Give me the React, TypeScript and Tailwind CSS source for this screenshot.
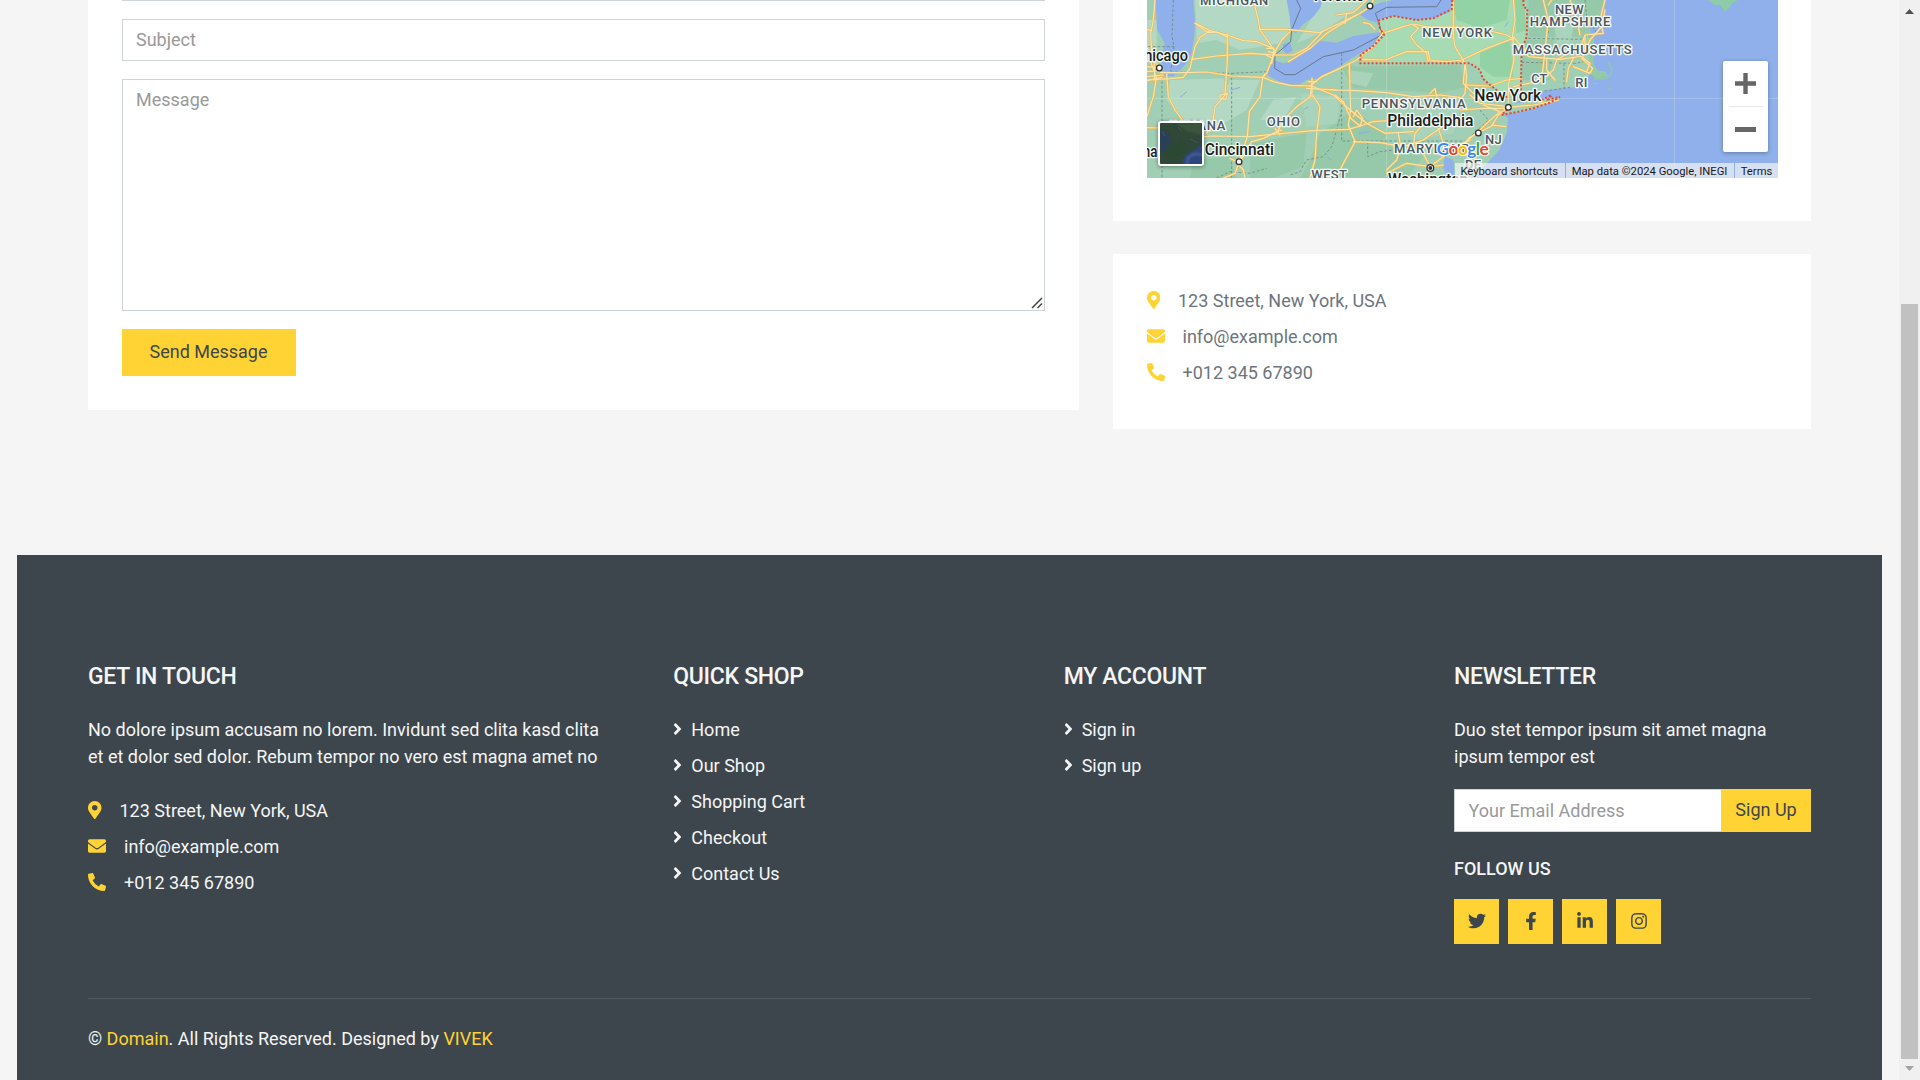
import React from "react";
import {
  FaAngleRight,
  FaEnvelope,
  FaFacebookF,
  FaInstagram,
  FaLinkedinIn,
  FaMapMarkerAlt,
  FaPhoneAlt,
  FaTwitter,
} from "react-icons/fa";

const roads = [
  "M45 0 L40 60 L32 100 L36 170 L58 204",
  "M21 88 L36 92 M21 200 L58 204 M21 215 L60 212 M21 230 L70 225 M30 180 L50 235 M42 175 L44 240 M21 242 L66 232",
  "M48 240 L40 290 L30 320 L21 350",
  "M21 240 L90 236 L130 232 L150 205 L165 140 L180 112 L210 92 L168 70",
  "M80 222 L85 290 L105 330 L140 378 L150 410",
  "M60 218 L130 218 L200 216 L275 228 L370 232 L400 245 L450 256 L515 258 L580 285 L625 325 L655 350 L680 370 L735 400 L820 395",
  "M210 92 L260 105 L310 122 L350 125 L400 145",
  "M165 70 L205 98 L230 96 L260 110",
  "M340 0 L355 60 L360 90 L385 125 L402 150",
  "M360 88 L440 88 L540 98 L595 72 L660 40 L690 20 L700 0",
  "M155 178 L230 168 L330 160 L400 165",
  "M402 160 L425 120 L450 95",
  "M405 155 L380 220 L368 232 L360 290 L328 335 L322 410 L297 485",
  "M380 145 L402 145 M385 155 L405 160 M378 165 L398 175 M402 150 L395 190",
  "M262 100 L262 180 L258 240 L255 285 L225 320 L218 370 L200 400",
  "M400 165 L460 165 L500 145 L545 98 M445 185 L510 145 L560 100 L620 62 L650 45",
  "M590 45 L640 38 L680 0 M620 40 L615 70",
  "M240 285 L262 280 L258 298 L240 295 Z",
  "M21 383 L55 384 M150 412 L220 408 L330 410 L410 402 L520 392 L625 388 L660 378",
  "M515 260 L510 290 L470 320 L440 350 L412 395 L370 415 L335 425 L300 485",
  "M297 488 L270 475 M297 490 L285 520 L250 534 M290 488 L310 510 L315 534 M300 480 L320 440",
  "M516 235 L516 290 M505 245 L530 245 M500 265 L590 270 M520 288 L540 320 L530 400 L525 480 L510 534",
  "M368 232 L375 222 M405 385 L420 405 M400 400 L425 390",
  "M510 258 L545 230 L600 205 L650 180 L700 140 L728 100",
  "M628 190 L630 270 L632 330 L625 375 L645 425 L605 500 L590 534",
  "M570 270 L650 272 L740 278 L820 290 L900 285 L960 292",
  "M585 285 L610 305 L632 355 L660 378 L668 355 L650 330 L640 350",
  "M640 425 L720 428 L790 440 L850 420 L900 385 L940 350",
  "M660 378 L700 365 L770 360 M775 400 L782 440 L770 480 L740 510",
  "M820 440 L825 400 L860 360 M870 280 L885 265 L890 290",
  "M840 440 L870 500 L910 495 M870 500 L930 455 L990 420 M870 500 L855 534 M870 500 L800 490 L740 520 M895 385 L910 430 L990 440",
  "M735 98 L790 80 L820 72 L870 82 L940 82 L1020 85 L1100 105 L1120 118",
  "M820 75 L835 85 L812 110 L830 135 L860 160 L865 188",
  "M665 178 L735 180 L800 155 L865 155 L870 182 L920 185 L965 180 L1040 145 L1120 115",
  "M940 0 L940 110 L945 140 L975 190 L980 230 L975 280 L955 310",
  "M670 68 L690 72 L705 88 M720 95 L730 90",
  "M1120 0 L1125 60 L1118 105 L1122 180 L1105 255 L1105 320",
  "M1120 110 L1150 145 L1165 170 L1260 178 L1330 168 L1350 120 L1385 80 L1395 30",
  "M1210 0 L1225 60 L1215 150 L1208 215 L1190 245 L1120 260",
  "M1290 0 L1310 55 L1320 105",
  "M1235 0 L1225 15 M1395 0 L1380 60 L1390 100 L1335 105 L1325 135 L1290 155 L1250 180 L1240 210 L1200 245",
  "M1300 175 L1285 205 L1280 245 M1325 170 L1350 190 L1340 215 M1220 175 L1220 210 L1245 240 M1335 110 L1335 155",
  "M1300 200 L1350 220 L1358 205 L1325 175",
  "M960 185 L975 190 L970 250 L1000 280 L1090 285",
  "M975 255 L1050 258 L1100 240 L1145 235 M990 285 L1020 310 L1105 320",
  "M960 330 L1030 325 L1105 325 M1030 315 L1080 335 L1040 370 L1015 395 L970 430",
  "M1105 322 L1180 315 L1235 305 L1255 300",
  "M1105 320 L1075 345 L1055 378 L1015 398 L985 415 M1055 375 L1098 380",
];

const borders = [
  "M100 0 L96 110 L102 140 L21 140 M102 140 L92 215",
  "M66 230 L66 534 M92 215 L275 220 L275 534 M275 220 L385 215",
  "M605 160 L605 423 L985 423",
  "M605 330 L590 390 L575 440 L550 470 L500 480 L480 515 L450 525",
  "M683 425 L683 470 L720 455 L760 450",
  "M230 534 L270 515 L330 520 L380 505",
  "M1165 115 L1320 118 L1370 100 M1145 187 L1310 190 L1330 185 M1272 190 L1272 265 M1225 100 L1222 30",
  "M1200 275 L1290 262 M1335 0 L1340 50 L1370 100",
  "M1020 330 L1045 360 L985 415",
];

const cities: [number, number][] = [
  [690, 18],
  [58, 204],
  [297, 485],
  [1105, 322],
  [1015, 399],
];

type Label = { t: string; x: number; y: number; w: number };

const states: Label[] = [
  { t: "MICHIGAN", x: 180, y: 16, w: 205 },
  { t: "OHIO", x: 380, y: 378, w: 100 },
  { t: "INDIANA", x: 88, y: 390, w: 168 },
  { t: "PENNSYLVANIA", x: 665, y: 323, w: 312 },
  { t: "NEW YORK", x: 847, y: 111, w: 209 },
  { t: "MARYLAND", x: 762, y: 459, w: 228 },
  { t: "WEST", x: 514, y: 537, w: 107 },
  { t: "NEW", x: 1245, y: 41, w: 86 },
  { t: "HAMPSHIRE", x: 1169, y: 78, w: 242 },
  { t: "MASSACHUSETTS", x: 1118, y: 162, w: 357 },
  { t: "CT", x: 1174, y: 249, w: 48 },
  { t: "RI", x: 1306, y: 261, w: 36 },
  { t: "NJ", x: 1035, y: 432, w: 50 },
  { t: "DE", x: 975, y: 507, w: 48 },
];

const towns: Label[] = [
  { t: "Toronto", x: 514, y: 2, w: 160 },
  { t: "Chicago", x: -16, y: 182, w: 160 },
  { t: "Cincinnati", x: 194, y: 464, w: 208 },
  { t: "Indiana", x: -80, y: 470, w: 132 },
  { t: "Philadelphia", x: 742, y: 377, w: 258 },
  { t: "New York", x: 1003, y: 302, w: 201 },
  { t: "Washington", x: 744, y: 554, w: 240 },
];

function MapDrawing() {
  return (
    <svg viewBox="21 0 1893 534" className="block h-full w-full" preserveAspectRatio="none">
      <rect x="21" width="1893" height="534" fill="#a1cfb5" />
      <g fill="#b3d8c3">
        <path d="M165 0 H440 L455 95 L420 130 L300 150 L230 120 L170 130Z" />
        <path d="M90 240 L250 235 L270 300 L210 390 L130 360 L80 300Z" />
        <path d="M270 240 L360 240 L320 330 L200 400 L230 330Z" />
        <path d="M545 0 H690 L600 60 L540 100 L470 130 L500 80Z" />
        <path d="M21 60 H50 V150 L21 165Z" />
        <path d="M400 300 L470 290 L430 360 L360 360Z" />
      </g>
      <g fill="#96c9a9">
        <path d="M605 200 L960 195 L980 260 L900 280 L740 270 L640 265Z" />
        <path d="M540 400 L640 330 L740 400 L700 534 H480 L510 480Z" />
        <path d="M330 430 L500 400 L490 500 L400 534 H330Z" />
        <path d="M160 480 L270 470 L290 534 H150Z" />
        <path d="M1165 0 H1390 L1340 110 L1170 110Z" />
        <path d="M1150 120 L1240 120 L1230 240 L1145 240Z" />
        <path d="M720 430 L850 470 L800 534 H690Z" />
      </g>
      <g fill="#a9d4bb">
        <path d="M620 210 L700 220 L680 260 L630 250Z" />
        <path d="M740 300 L960 310 L940 400 L820 420 L780 380Z" />
        <path d="M1240 60 L1300 80 L1290 140 L1250 130Z" />
        <path d="M480 280 L600 290 L590 370 L500 380Z" />
      </g>

      <path
        d="M715 60 L760 48 L830 60 L880 55 L930 35 L937 0 H1150 L1162 25 L1160 100 L1145 170 L1140 285 L1095 285 L1040 245 L995 190 H660 L662 175 L730 105Z"
        fill="#a6dbb4"
      />
      <g fill="#93d2a4">
        <path d="M937 0 H1110 L1100 60 L1020 85 L950 60Z" />
        <path d="M1020 160 L1110 120 L1120 230 L1060 230 L1020 200Z" />
        <path d="M1125 0 H1150 L1160 90 L1130 100Z" />
      </g>

      <g fill="#8fb0ea">
        <path d="M46 0 H160 L165 60 L164 100 L155 160 L140 190 L100 230 L72 226 L64 180 L74 130 L52 90Z" />
        <path d="M440 0 H545 L542 22 L520 50 L490 72 L468 100 L452 90 L450 50Z" />
        <path d="M428 132 L450 125 L458 152 L440 162 L430 152Z" />
        <path d="M400 180 L430 190 L455 182 L500 140 L540 122 L590 128 L640 108 L715 97 L730 105 L700 138 L650 165 L600 198 L540 235 L500 240 L470 258 L420 246 L380 224Z" />
        <path d="M660 45 L690 22 L720 8 L760 0 H937 L930 35 L880 55 L830 60 L760 48 L715 60 L720 70 L690 62Z" />
        <path d="M1395 0 L1375 50 L1350 85 L1352 105 L1362 120 L1360 170 L1358 205 L1340 240 L1300 262 L1210 272 L1120 312 L1262 290 L1255 300 L1180 328 L1090 345 L1104 355 L1100 400 L1078 450 L1050 480 L1000 534 H1914 V0Z" />
        <path d="M915 470 L940 480 L945 534 L925 534 L908 500Z" />
      </g>
      <path d="M1403 188 Q1418 200 1413 222 Q1400 240 1362 236" fill="none" stroke="#8fc9a9" strokeWidth="5" />
      <path d="M1352 95 L1362 130 L1356 160 L1362 195 L1375 212 L1395 214 L1404 228 L1368 236 L1345 215Z" fill="#93caa9" />
      <path d="M1383 0 H1397 L1365 60 L1345 90Z" fill="#94c9a7" />
      <path d="M1704 0 L1725 16 L1740 14 L1755 36 L1772 18 L1778 8 L1795 0Z" fill="#8ecba8" />
      <path d="M1360 250 h12 M1402 267 h12" stroke="#8fc9a9" strokeWidth="4" />

      <g stroke="#85aee8" strokeWidth="3" fill="none">
        <path d="M140 275 L120 292 M275 270 L300 262 M180 395 L190 408 M120 440 L140 430 M655 400 L690 395 M560 470 L575 480 M1095 80 L1105 65 M1180 60 L1185 50 M900 330 L915 325 M505 320 L490 330" />
      </g>

      <g stroke="#ffffff" strokeOpacity=".22" strokeWidth="3">
        <path d="M21 295 H1914 M740 0 V534 M1603 0 V534" />
      </g>

      <g fill="none" stroke="#6f8584" strokeWidth="2.5" strokeDasharray="8 6">
        {borders.map((d) => (
          <path key={d} d={d} />
        ))}
      </g>
      <g fill="none" stroke="#68788c" strokeWidth="3">
        <path d="M470 0 L482 25 L455 90 L452 125 L405 165 L404 205 L435 224 L465 224 L550 170 L640 150 L725 105 L718 70 L706 40 L740 22 L890 20 L903 0" />
      </g>

      <g fill="none" strokeLinejoin="round" strokeLinecap="round">
        <g stroke="#e6b95c" strokeWidth="7">
          {roads.map((d) => (
            <path key={d} d={d} />
          ))}
        </g>
        <g stroke="#fce3a6" strokeWidth="3.6">
          {roads.map((d) => (
            <path key={d} d={d} />
          ))}
        </g>
      </g>

      <g fill="none" stroke="#ea4335" strokeWidth="6" strokeDasharray="6 6">
        <path d="M937 0 L935 28 L905 42 L880 55 L830 60 L760 48 L715 62 L718 80 L732 105 L700 138 L662 165 L661 190 H990 L1020 210 L1028 235 L1050 255 L1085 282 L1105 295" />
        <path d="M1150 0 L1151 22 L1162 25 L1160 110 L1145 150 L1142 285 L1140 305" />
        <path d="M1205 300 L1235 285 L1225 298 L1260 291 L1230 308 L1180 325 L1135 335 L1085 345 L1105 325" />
      </g>

      <g fill="#fff" stroke="#333" strokeWidth="4">
        {cities.map(([x, y]) => (
          <circle key={x} cx={x} cy={y} r="8.5" />
        ))}
        <circle cx="871" cy="504" r="10" />
        <circle cx="871" cy="504" r="4" fill="#222" />
      </g>

      <g
        fontFamily="Roboto, sans-serif"
        paintOrder="stroke"
        strokeLinejoin="round"
        stroke="#f4faf5"
        strokeWidth="8"
      >
        <g fontSize="39" fontWeight="500" fill="#4c5560">
          {states.map((l) => (
            <text key={l.t} x={l.x} y={l.y} textLength={l.w}>
              {l.t}
            </text>
          ))}
        </g>
        <g fontSize="47" fontWeight="500" fill="#1b1d20">
          {towns.map((l) => (
            <text key={l.t} x={l.x} y={l.y} textLength={l.w} lengthAdjust="spacingAndGlyphs">
              {l.t}
            </text>
          ))}
        </g>
        <text x="890" y="465" fontSize="52" textLength="156" strokeWidth="7" fontFamily="Lato, sans-serif" fontWeight="700">
          <tspan fill="#4285f4">G</tspan>
          <tspan fill="#ea4335">o</tspan>
          <tspan fill="#fbbc04">o</tspan>
          <tspan fill="#4285f4">g</tspan>
          <tspan fill="#34a853">l</tspan>
          <tspan fill="#ea4335">e</tspan>
        </text>
      </g>
    </svg>
  );
}

function SatelliteToggle() {
  return (
    <div className="absolute top-[121px] left-[11px] h-[45px] w-[46px] overflow-hidden rounded-[3px] border-2 border-white shadow-[0_1px_4px_rgba(0,0,0,0.4)]">
      <svg viewBox="0 0 42 41" className="block h-full w-full" preserveAspectRatio="none">
        <defs>
          <filter id="soft">
            <feGaussianBlur stdDeviation="1.2" />
          </filter>
        </defs>
        <rect width="42" height="41" fill="#2f4838" />
        <g filter="url(#soft)">
          <path d="M0 6 L8 10 L12 20 L3 30 L0 28Z" fill="#2b3f58" />
          <path d="M16 0 H42 V12 L26 8Z" fill="#3a563c" />
          <path d="M6 24 L22 18 L26 30 L10 38Z" fill="#2b4a31" />
          <path d="M44 20 L34 27 L25 33 L22 43 H44Z" fill="#2f4480" />
          <path d="M44 32 L34 31 L28 35 L27 43" stroke="#4d6298" strokeWidth="2" fill="none" />
        </g>
        <path d="M2 8 L5 13 M18 4 L22 8 M30 16 L38 20" stroke="#40597a" strokeWidth="0.8" />
      </svg>
    </div>
  );
}

function MapPanel() {
  return (
    <div className="relative h-[178px] w-[631px] overflow-hidden">
      <MapDrawing />
      <SatelliteToggle />
      <div className="absolute top-[61px] left-[576px] flex h-[91px] w-[45px] flex-col items-center rounded-[2px] bg-white shadow-[0_1px_4px_rgba(0,0,0,0.3)]">
        <div className="flex h-[45px] items-center">
          <svg viewBox="0 0 21 21" className="h-[21px] w-[21px]">
            <path d="M0 10.5H21M10.5 0V21" stroke="#666" strokeWidth="4.4" />
          </svg>
        </div>
        <div className="h-px w-[34px] bg-[#e6e6e6]" />
        <div className="flex h-[45px] items-center">
          <div className="h-[5px] w-[21px] bg-[#666]" />
        </div>
      </div>
      <div className="absolute right-0 bottom-0 flex h-[15px] text-[11.25px] leading-[17px] whitespace-nowrap text-[#1a1a1a]">
        <div className="w-[110px] bg-[#f5f5f5]/70 pr-[7px] text-right">Keyboard shortcuts</div>
        <div className="ml-px w-[168px] bg-[#f5f5f5]/70 pr-px text-center">
          Map data ©2024 Google, INEGI
        </div>
        <div className="ml-px w-[43px] bg-[#f5f5f5]/70 text-center">Terms</div>
      </div>
    </div>
  );
}

function ContactLines() {
  return (
    <div>
      <p className="mb-[9px] flex items-center">
        <FaMapMarkerAlt className="mr-[18px] h-[18px] w-[13.5px] text-[#FFD333]" />
        123 Street, New York, USA
      </p>
      <p className="mb-[9px] flex items-center">
        <FaEnvelope className="mr-[18px] h-[18px] w-[18px] text-[#FFD333]" />
        info@example.com
      </p>
      <p className="flex items-center">
        <FaPhoneAlt className="mr-[18px] h-[18px] w-[18px] text-[#FFD333]" />
        +012 345 67890
      </p>
    </div>
  );
}

function FooterHeading({ children }: { children: React.ReactNode }) {
  return (
    <h5 className="mb-[26px] text-[23px] leading-[27px] font-medium tracking-[-0.3px] uppercase">
      {children}
    </h5>
  );
}

function LinkList({ items }: { items: string[] }) {
  return (
    <ul className="flex flex-col gap-[9px]">
      {items.map((item) => (
        <li key={item}>
          <a className="flex items-center">
            <FaAngleRight className="mr-[9px] h-[18px] w-[9px]" />
            {item}
          </a>
        </li>
      ))}
    </ul>
  );
}

const socials = [FaTwitter, FaFacebookF, FaLinkedinIn, FaInstagram];

export default function App() {
  return (
    <div className="flex h-[1080px] w-[1920px] overflow-hidden bg-[#f5f5f5] font-['Roboto',sans-serif] text-[18px] leading-[27px] text-[#6c757d]">
      <div className="flex w-[1899px] flex-col">
        <main className="flex h-[555px] items-start gap-[34px] pl-[88px]">
          <form className="flex h-[410px] w-[991px] flex-col items-start bg-white px-[34px]">
            <div className="mb-[18px] h-px w-full bg-[#ced4da]" />
            <input
              placeholder="Subject"
              className="mb-[18px] h-[42px] w-full border border-[#ced4da] px-[13px] pb-[2px] outline-none placeholder:text-[#999]"
            />
            <div className="relative mb-[18px] h-[232px] w-full">
              <textarea
                placeholder="Message"
                className="block h-full w-full resize-none border border-[#ced4da] px-[13px] py-[6px] outline-none placeholder:text-[#999]"
              />
              <svg
                viewBox="0 0 12 12"
                className="absolute right-[2px] bottom-[2px] h-[12px] w-[12px]"
              >
                <path d="M1 11 L11 1 M6.5 11 L11 6.5" stroke="#444" strokeWidth="1.5" />
              </svg>
            </div>
            <button type="button" className="h-[47px] w-[174px] bg-[#FFD333] pr-px pb-[2px] text-[#3D464D]">
              Send Message
            </button>
          </form>
          <div className="flex w-[698px] flex-col">
            <div className="mb-[33px] h-[221px] bg-white px-[34px]">
              <MapPanel />
            </div>
            <div className="h-[175px] bg-white px-[33.5px] pt-[32.5px]">
              <ContactLines />
            </div>
          </div>
        </main>

        <footer className="mr-[17px] ml-[17px] h-[525px] bg-[#3D464D] px-[71px] pt-[107.5px] text-[#f5f5f5]">
          <div className="flex h-[335px]">
            <section className="w-[585.5px]">
              <FooterHeading>Get In Touch</FooterHeading>
              <p className="mb-[27px] w-[530px]">
                No dolore ipsum accusam no lorem. Invidunt sed clita kasd clita et et dolor sed
                dolor. Rebum tempor no vero est magna amet no
              </p>
              <ContactLines />
            </section>
            <section className="w-[390.5px]">
              <FooterHeading>Quick Shop</FooterHeading>
              <LinkList items={["Home", "Our Shop", "Shopping Cart", "Checkout", "Contact Us"]} />
            </section>
            <section className="w-[390.5px]">
              <FooterHeading>My Account</FooterHeading>
              <LinkList items={["Sign in", "Sign up"]} />
            </section>
            <section className="w-[357px]">
              <FooterHeading>Newsletter</FooterHeading>
              <p className="mb-[19px]">Duo stet tempor ipsum sit amet magna ipsum tempor est</p>
              <div className="mb-[26px] flex h-[43px]">
                <input
                  placeholder="Your Email Address"
                  className="w-[267px] border border-r-0 border-[#ced4da] bg-white px-[13.5px] outline-none placeholder:text-[#999]"
                />
                <button type="button" className="w-[90px] bg-[#FFD333] pb-[2px] text-[#3D464D]">
                  Sign Up
                </button>
              </div>
              <h6 className="mb-[19px] text-[18px] leading-[22px] font-medium uppercase">
                Follow Us
              </h6>
              <div className="flex gap-[9px]">
                {socials.map((Icon, i) => (
                  <a
                    key={i}
                    className="flex h-[45px] w-[45px] items-center justify-center bg-[#FFD333] text-[#3D464D]"
                  >
                    <Icon className="h-[18px] w-[18px]" />
                  </a>
                ))}
              </div>
            </section>
          </div>
          <div className="border-t border-[#505960] pt-[26px]">
            © <a className="text-[#FFD333]">Domain</a>. All Rights Reserved. Designed by{" "}
            <a className="text-[#FFD333]">VIVEK</a>
          </div>
        </footer>
      </div>

      <div className="flex w-[21px] flex-col items-center bg-[#f0f0f0]">
        <svg viewBox="0 0 21 21" className="h-[21px] w-[21px]">
          <path d="M6 14 L10.5 9 L15 14Z" fill="#505050" />
        </svg>
        <div className="mt-[283px] h-[755px] w-[17px] bg-[#c1c1c1]" />
        <svg viewBox="0 0 21 21" className="h-[21px] w-[21px]">
          <path d="M6 7 L10.5 12 L15 7Z" fill="#a3a3a3" />
        </svg>
      </div>
    </div>
  );
}
